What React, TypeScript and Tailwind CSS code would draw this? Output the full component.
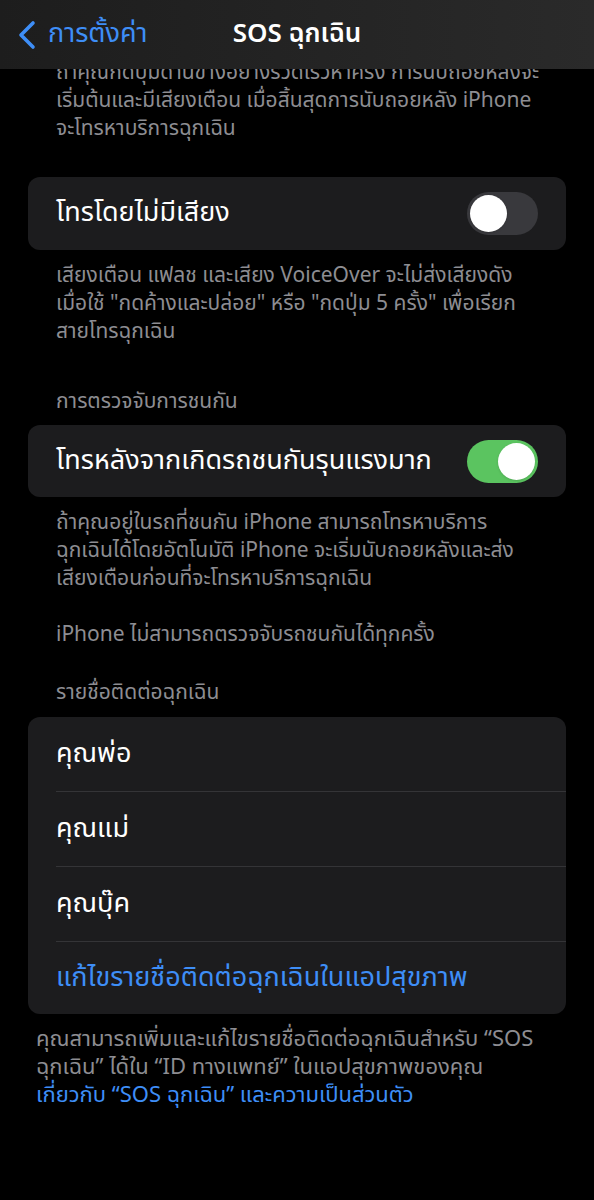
const font = { fontFamily: '"Noto Sans Thai", "Noto Sans", "DejaVu Sans", sans-serif' };

function Toggle({ on }: { on: boolean }) {
    return (
        <div className={`w-[71px] h-[43px] rounded-full p-[3px] flex ${on ? "bg-[#5bc460] justify-end" : "bg-[#39393d] justify-start"}`}>
            <div className="w-[37px] h-[37px] rounded-full bg-white shadow" />
        </div>
    );
}

function Lines({ lines, className }: { lines: string[]; className?: string }) {
    return (
        <div className={className}>
            {lines.map((l) => (
                <div key={l} className="whitespace-nowrap">{l}</div>
            ))}
        </div>
    );
}

export default function App() {
    const contacts = ["คุณพ่อ", "คุณแม่", "คุณบุ๊ค"];
    return (
        <div className="w-[594px] h-[1200px] bg-black overflow-hidden flex flex-col" style={font}>
            <div className="h-[69px] shrink-0 bg-gradient-to-r from-[#1d1d1d] to-[#2a2a2a] flex items-center relative z-10">
                <div className="flex items-center pl-[17px] text-[#3e8ef7]">
                    <svg width="20" height="30" viewBox="0 0 20 30" fill="none">
                        <polyline points="16,3 4,15 16,27" stroke="currentColor" strokeWidth="3.6" strokeLinecap="round" strokeLinejoin="round" />
                    </svg>
                    <span className="text-[27px] ml-[11px]">การตั้งค่า</span>
                </div>
                <div className="absolute left-0 right-0 text-center text-white text-[26px] font-semibold pointer-events-none">
                    SOS ฉุกเฉิน
                </div>
            </div>

            <div className="flex-1 overflow-hidden">
                <Lines
                    className="mt-[-10px] px-[56px] text-[21px] leading-[28px] text-[#8d8d92]"
                    lines={[
                        "ถ้าคุณกดปุ่มด้านข้างอย่างรวดเร็วห้าครั้ง การนับถอยหลังจะ",
                        "เริ่มต้นและมีเสียงเตือน เมื่อสิ้นสุดการนับถอยหลัง iPhone",
                        "จะโทรหาบริการฉุกเฉิน",
                    ]}
                />

                <div className="mx-[28px] mt-[34px] h-[73px] rounded-[12px] bg-[#1c1c1e] flex items-center justify-between pl-[28px] pr-[28px]">
                    <span className="text-white text-[27px]">โทรโดยไม่มีเสียง</span>
                    <Toggle on={false} />
                </div>
                <Lines
                    className="mt-[12px] px-[56px] text-[21px] leading-[28px] text-[#8d8d92]"
                    lines={[
                        "เสียงเตือน แฟลช และเสียง VoiceOver จะไม่ส่งเสียงดัง",
                        "เมื่อใช้ \"กดค้างและปล่อย\" หรือ \"กดปุ่ม 5 ครั้ง\" เพื่อเรียก",
                        "สายโทรฉุกเฉิน",
                    ]}
                />

                <div className="mt-[44px] px-[56px] text-[21px] leading-[24px] text-[#8d8d92]">การตรวจจับการชนกัน</div>
                <div className="mx-[28px] mt-[11px] h-[72px] rounded-[12px] bg-[#1c1c1e] flex items-center justify-between pl-[28px] pr-[28px]">
                    <span className="text-white text-[27px]">โทรหลังจากเกิดรถชนกันรุนแรงมาก</span>
                    <Toggle on={true} />
                </div>
                <Lines
                    className="mt-[12px] px-[56px] text-[21px] leading-[28px] text-[#8d8d92]"
                    lines={[
                        "ถ้าคุณอยู่ในรถที่ชนกัน iPhone สามารถโทรหาบริการ",
                        "ฉุกเฉินได้โดยอัตโนมัติ iPhone จะเริ่มนับถอยหลังและส่ง",
                        "เสียงเตือนก่อนที่จะโทรหาบริการฉุกเฉิน",
                    ]}
                />
                <div className="mt-[28px] px-[56px] text-[21px] leading-[28px] text-[#8d8d92]">
                    iPhone ไม่สามารถตรวจจับรถชนกันได้ทุกครั้ง
                </div>

                <div className="mt-[32px] px-[56px] text-[21px] leading-[24px] text-[#8d8d92]">รายชื่อติดต่อฉุกเฉิน</div>
                <div className="mx-[28px] mt-[12px] rounded-[12px] bg-[#1c1c1e] overflow-hidden">
                    {contacts.map((c) => (
                        <div key={c} className="pl-[28px]">
                            <div className="h-[75px] flex items-center border-b border-[#343437] pr-[28px]">
                                <span className="text-white text-[27px]">{c}</span>
                            </div>
                        </div>
                    ))}
                    <div className="h-[72px] flex items-center pl-[28px]">
                        <span className="text-[#3e8ef7] text-[27px]">แก้ไขรายชื่อติดต่อฉุกเฉินในแอปสุขภาพ</span>
                    </div>
                </div>

                <div className="mt-[12px] px-[36px] text-[22px] leading-[28px] text-[#8d8d92]">
                    <div className="whitespace-nowrap">คุณสามารถเพิ่มและแก้ไขรายชื่อติดต่อฉุกเฉินสำหรับ “SOS</div>
                    <div className="whitespace-nowrap">ฉุกเฉิน” ได้ใน “ID ทางแพทย์” ในแอปสุขภาพของคุณ</div>
                    <div className="whitespace-nowrap text-[#3e8ef7]">เกี่ยวกับ “SOS ฉุกเฉิน” และความเป็นส่วนตัว</div>
                </div>
            </div>
        </div>
    );
}
